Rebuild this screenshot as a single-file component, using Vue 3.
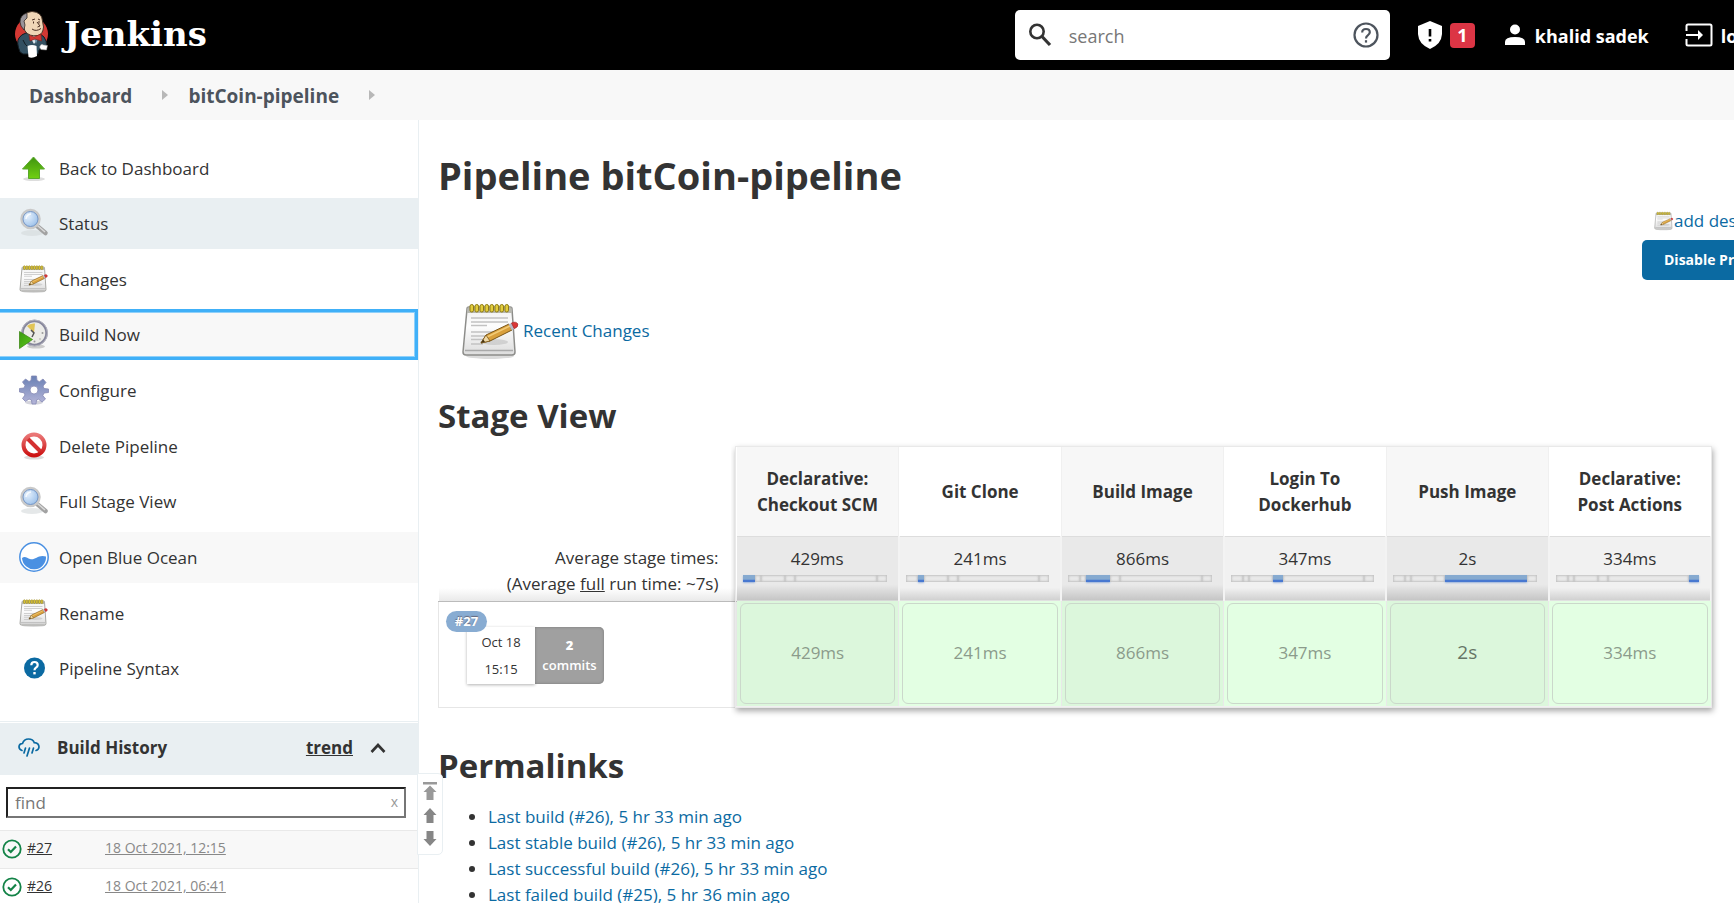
<script setup>
const tasks = [
  { label: 'Back to Dashboard', icon: 'i-up' },
  { label: 'Status', icon: 'i-search', state: 'active' },
  { label: 'Changes', icon: 'i-notepad' },
  { label: 'Build Now', icon: 'i-clock', state: 'focused' },
  { label: 'Configure', icon: 'i-gear' },
  { label: 'Delete Pipeline', icon: 'i-delete' },
  { label: 'Full Stage View', icon: 'i-search' },
  { label: 'Open Blue Ocean', icon: 'i-ocean', state: 'hovered' },
  { label: 'Rename', icon: 'i-notepad' },
  { label: 'Pipeline Syntax', icon: 'i-help' },
]
const builds = [
  { id: '#27', date: '18 Oct 2021, 12:15' },
  { id: '#26', date: '18 Oct 2021, 06:41' },
]
const stages = [
  { name: ['Declarative:', 'Checkout SCM'], time: '429ms', share: 12 },
  { name: ['Git Clone'], time: '241ms', share: 6 },
  { name: ['Build Image'], time: '866ms', share: 24 },
  { name: ['Login To', 'Dockerhub'], time: '347ms', share: 10 },
  { name: ['Push Image'], time: '2s', share: 81, slow: true },
  { name: ['Declarative:', 'Post Actions'], time: '334ms', share: 10 },
]
const permalinks = [
  'Last build (#26), 5 hr 33 min ago',
  'Last stable build (#26), 5 hr 33 min ago',
  'Last successful build (#26), 5 hr 33 min ago',
  'Last failed build (#25), 5 hr 36 min ago',
]
</script>

<template>
  <div class="page">
    <svg class="defs" aria-hidden="true">
      <defs>
        <linearGradient id="g-up" x1="0" y1="0" x2="0" y2="1"><stop offset="0" stop-color="#3f9410" /><stop offset="1" stop-color="#70d010" /></linearGradient>
        <linearGradient id="g-paper" x1="0" y1="0" x2="0" y2="1"><stop offset="0" stop-color="#f1f1f1" /><stop offset=".4" stop-color="#fdfdfd" /><stop offset="1" stop-color="#dcdcdc" /></linearGradient>
        <linearGradient id="g-gear" x1="0" y1="0" x2="0" y2="1"><stop offset="0" stop-color="#6980b4" /><stop offset="1" stop-color="#b5b5d8" /></linearGradient>
        <linearGradient id="g-red" x1="0" y1="0" x2="0" y2="1"><stop offset="0" stop-color="#ea7777" /><stop offset="1" stop-color="#cc1212" /></linearGradient>
        <radialGradient id="g-lens" cx=".35" cy=".35" r=".75"><stop offset="0" stop-color="#e6f1fd" /><stop offset="1" stop-color="#8fb8e6" /></radialGradient>
        <linearGradient id="g-play" x1="0" y1="0" x2="1" y2="1"><stop offset="0" stop-color="#3a9a10" /><stop offset="1" stop-color="#5cc81c" /></linearGradient>
      </defs>
      <symbol id="i-up" viewBox="0 0 30 30">
        <ellipse cx="15" cy="26" rx="11" ry="2" fill="#ddd" />
        <path d="M14.500 4 L25.500 16 H20.500 V25.500 H9.500 V16 H3.500 Z" fill="url(#g-up)" stroke="#5aa82c" stroke-width="1" />
      </symbol>
      <symbol id="i-search" viewBox="0 0 30 30">
        <ellipse cx="13" cy="25" rx="11" ry="3" fill="#d4d8da" opacity=".6" />
        <path d="M17.500 17.500 L26.500 25" stroke="#a2a2a2" stroke-width="4.500" stroke-linecap="round" />
        <path d="M18.500 17.500 L26 24" stroke="#d9d9d9" stroke-width="1.500" />
        <circle cx="11.500" cy="11" r="9" fill="url(#g-lens)" stroke="#c9c9c9" stroke-width="2.500" />
        <circle cx="11.500" cy="11" r="7.500" fill="none" stroke="#7897c4" stroke-width="1" />
        <path d="M7 11 Q7.500 6.500 12 6" stroke="#fff" stroke-width="1.500" fill="none" opacity=".8" />
      </symbol>
      <symbol id="i-notepad" viewBox="0 0 60 60">
        <ellipse cx="29" cy="55" rx="24" ry="3" fill="#ccc" opacity=".7" />
        <path d="M6 8 Q6 6 8 6 H49 Q51 6 51 8 L54 51 Q54 54 51 54 H5 Q2 54 2 51 Z" fill="url(#g-paper)" stroke="#8d8d8a" stroke-width="1.500" />
        <path d="M6.500 6.500 H50.500 L51 12 H6 Z" fill="#b8b8b0" />
        <path d="M4 49.500 H52" stroke="#a9a9a9" stroke-width="1.500" />
        <g stroke="#c2c2c2" stroke-width="1.500"><path d="M10 17H47M10 21H47M10 24.500H26M10 31H42M10 35H37M10 38.500H30M10 43H22" /></g>
        <g fill="#e3cd3c" stroke="#8d7b12" stroke-width="1"><rect x="9" y="3.500" width="3.500" height="7.500" rx="1.700" /><rect x="14" y="3.500" width="3.500" height="7.500" rx="1.700" /><rect x="19" y="3.500" width="3.500" height="7.500" rx="1.700" /><rect x="24" y="3.500" width="3.500" height="7.500" rx="1.700" /><rect x="29" y="3.500" width="3.500" height="7.500" rx="1.700" /><rect x="34" y="3.500" width="3.500" height="7.500" rx="1.700" /><rect x="39" y="3.500" width="3.500" height="7.500" rx="1.700" /><rect x="44" y="3.500" width="3.500" height="7.500" rx="1.700" /></g>
        <ellipse cx="33" cy="41" rx="14" ry="3" fill="#aaa" opacity=".4" />
        <path d="M20 42 L25 34 L48 23 L51 29 L29 40 Z" fill="#d9a03c" stroke="#7a5516" stroke-width="1" />
        <path d="M26 36 L49 25" stroke="#f3cc78" stroke-width="1.500" />
        <path d="M20 42 L25 34 L29 40 Z" fill="#efd8a4" stroke="#7a5516" stroke-width=".800" />
        <path d="M20 42 L22.200 38.500 L24 40.800 Z" fill="#443211" />
        <path d="M47.500 23.300 L50.500 22 L53.300 27.700 L50.500 29 Z" fill="#b9b9c6" />
        <path d="M50.500 22 Q55 20 56.800 23 Q57.500 26 53.300 27.700 Z" fill="#dc3535" stroke="#a83030" stroke-width=".800" />
      </symbol>
      <symbol id="i-clock" viewBox="0 0 30 30">
        <ellipse cx="17" cy="27.500" rx="9" ry="2" fill="#ccc" />
        <circle cx="15.500" cy="14" r="12" fill="#ecece8" stroke="#87879c" stroke-width="2.500" />
        <circle cx="15.500" cy="14" r="13" fill="none" stroke="#b4b4be" stroke-width="1" />
        <path d="M15 14 L8 7 Q11 4 16 4.500 Z" fill="#e1c455" />
        <path d="M12 11 L15 14 L13 18" stroke="#555" stroke-width="1.500" fill="none" />
        <g fill="#999"><circle cx="23.500" cy="14" r="1" /><circle cx="15.500" cy="22.500" r="1" /><circle cx="21" cy="20" r=".700" /></g>
        <path d="M.500 12.500 L13.500 20.500 L.500 29.500 Z" fill="url(#g-play)" stroke="#3f8a18" stroke-width=".800" />
      </symbol>
      <symbol id="i-gear" viewBox="0 0 30 30">
        <ellipse cx="15" cy="27.500" rx="9" ry="2" fill="#d4d4dc" />
        <path fill-rule="evenodd" d="M12.500 1 H17.500 L18 5.500 L20.500 6.700 L24 4 L27 7.500 L24 11 L25 13.500 L29.500 14 V17.500 L25 18 L23.800 20.500 L26.500 24 L23 27 L19.500 24.200 L17.500 25 L17 29 H13 L12.500 25 L10 24 L6.500 26.500 L3.500 23.500 L6 20 L5 17.800 L.500 17 V13.500 L5 13 L6 10.500 L3.500 7 L6.500 4 L10 6.500 L12 5.500 Z M15 11 A4 4 0 1 0 15 19 A4 4 0 1 0 15 11 Z" fill="url(#g-gear)" stroke="#8488b4" stroke-width=".800" />
      </symbol>
      <symbol id="i-delete" viewBox="0 0 30 30">
        <ellipse cx="15" cy="26.500" rx="10" ry="2" fill="#ddd" />
        <path d="M8 7 L22 21" stroke="#d43030" stroke-width="4" />
        <circle cx="15" cy="14" r="10.500" fill="none" stroke="url(#g-red)" stroke-width="4" />
      </symbol>
      <symbol id="i-ocean" viewBox="0 0 30 30">
        <circle cx="15" cy="15" r="14.200" fill="#fff" stroke="#4a90e2" stroke-width="1.500" />
        <path d="M3 16 C6 13.500 8 16 11 17 C16 18.800 19 12 27 14.500 A12 12 0 0 1 3 16 Z" fill="#4a90e2" />
      </symbol>
      <symbol id="i-help" viewBox="0 0 30 30">
        <circle cx="15.500" cy="15" r="10.500" fill="#0b6aa2" />
        <path d="M12.300 12.300 Q12.300 9 15.500 9 Q18.700 9 18.700 12 Q18.700 13.500 17 14.700 Q15.500 15.800 15.500 17.200" fill="none" stroke="#fff" stroke-width="2.200" />
        <rect x="14.300" y="19" width="2.400" height="2.400" fill="#fff" />
      </symbol>
    </svg>

    <header class="header">
      <a class="logo" href="#">
        <svg width="36" height="50" viewBox="0 0 36 50">
          <circle cx="17.500" cy="24" r="16.500" fill="#d33833" />
          <path d="M6 42 Q2 32 5 28 Q7 24.500 12 23 H25 L30 27 Q33 31 32.500 36 L25 40 L24 44 H9 Z" fill="#335061" stroke="#131c22" stroke-width="1" />
          <path d="M9 30 Q11 35 14 37" fill="none" stroke="#131c22" stroke-width="1" />
          <path d="M15 25 L20 34 L27 25 Z" fill="#dfe8ee" />
          <path d="M20 28 L22 34 L24 28 Z" fill="#6f93a8" />
          <path d="M8 13 Q8 2 18 1.500 Q28 2 28.500 11 L29.500 17 Q29 24 24 25.500 Q15 27 11 21 Z" fill="#f0d6b7" stroke="#49372a" stroke-width="1" />
          <path d="M13 3 Q6 5 6 12 L7 16 L10 20 L11 15 L10 11 L13 8 Z" fill="#99959a" stroke="#332c28" stroke-width=".800" />
          <path d="M18 10 L21 9 M24 9 L26 10 M19.500 11.500 V13.500 M25 11 V13.500 M23 12 L26 16 L23.500 17 M18 19 Q22 22 27 18.500" fill="none" stroke="#4a2f22" stroke-width="1" />
          <path d="M15 25 L20 27 L27 24 L27.500 31 L21 29 L16 31 Z" fill="#d33833" stroke="#81221e" stroke-width=".700" />
          <path d="M13.500 36 Q18 34 22.500 36 L23 46 Q18 49 14.500 47 Z" fill="#fff" />
          <path d="M25.500 37 Q27 33 29.500 35 L33.500 35.500 L32.500 40 L27 39.500 Z" fill="#fff" stroke="#999" stroke-width=".500" />
        </svg>
        <span>Jenkins</span>
      </a>
      <div class="search">
        <svg width="24" height="26" viewBox="0 0 24 26" fill="none" stroke="#333"><circle cx="9" cy="9.500" r="6.700" stroke-width="2.600" /><path d="M14 14.500 L22 23" stroke-width="3.200" /></svg>
        <input type="text" placeholder="search" aria-label="Search" />
        <a href="#" aria-label="Search help"><svg width="26" height="26" viewBox="0 0 26 26" fill="none" stroke="#4d545d" stroke-width="2.200"><circle cx="13" cy="13" r="11.500" /><path d="M9.200 10.500 Q9.200 7 13 7 Q16.800 7 16.800 10.300 Q16.800 12 14.800 13.300 Q13 14.500 13 16.500" /><path d="M13 18.200 V20.600" /></svg></a>
      </div>
      <a class="head-link alerts" href="#" aria-label="Security warnings">
        <svg width="24" height="28" viewBox="0 0 24 28"><path d="M12 0 L24 5 V13 Q23.500 23 12 28 Q.500 23 0 13 V5 Z" fill="#fff" /><path d="M12 8 V15.500 M12 18 V20.500" stroke="#000" stroke-width="2.600" /></svg>
        <span class="count">1</span>
      </a>
      <a class="head-link user" href="#">
        <svg width="22" height="22" viewBox="0 0 22 22" fill="#fff"><circle cx="11" cy="5.500" r="5" /><path d="M1 21 V18 Q1 13 11 13 Q21 13 21 18 V21 Z" /></svg>
        <span>khalid sadek</span>
      </a>
      <a class="head-link logout" href="#">
        <svg width="28" height="24" viewBox="0 0 28 24" fill="none" stroke="#fff" stroke-width="2"><path d="M1.500 8 V3 Q1.500 1.500 3 1.500 H25 Q26.500 1.500 26.500 3 V21 Q26.500 22.500 25 22.500 H3 Q1.500 22.500 1.500 21 V16" /><path d="M1 12 H15" /><path d="M13 7 L18 12 L13 17 Z" fill="#fff" stroke="none" /></svg>
        <span>log out</span>
      </a>
    </header>

    <nav class="crumbs" aria-label="Breadcrumb">
      <a href="#">Dashboard</a>
      <svg width="6" height="10" viewBox="0 0 6 10"><path d="M0 0 L6 5 L0 10 Z" fill="#b8b8b8" /></svg>
      <a href="#">bitCoin-pipeline</a>
      <svg width="6" height="10" viewBox="0 0 6 10"><path d="M0 0 L6 5 L0 10 Z" fill="#b8b8b8" /></svg>
    </nav>

    <div class="body">
      <aside class="side">
        <nav class="tasks">
          <a v-for="t in tasks" :key="t.label" href="#" :class="['task', t.state]">
            <svg width="30" height="30"><use :href="'#' + t.icon" /></svg>
            <span>{{ t.label }}</span>
          </a>
        </nav>
        <section class="history">
          <div class="history-head">
            <svg width="22" height="20" viewBox="0 0 22 20" fill="none" stroke="#0b6aa2" stroke-width="1.700" stroke-linecap="round"><path d="M4 12.500 Q1 11.500 1 8.700 Q1.200 5.700 4.500 5.500 Q6 1 10.500 1 Q15 1 16.200 4.600 Q21 5 21 9 Q20.800 11.700 18 12.500" /><path d="M7.500 10 L6 15 M11.500 10 L9 18 M15.500 10 L14 15" /></svg>
            <h2>Build History</h2>
            <a href="#">trend</a>
            <button type="button" aria-label="Collapse"><svg width="16" height="10" viewBox="0 0 16 10" fill="none" stroke="#333" stroke-width="2.600"><path d="M1.500 9 L8 2 L14.500 9" /></svg></button>
          </div>
          <div class="find">
            <input type="text" placeholder="find" aria-label="Find build" />
            <button type="button" aria-label="Clear">x</button>
          </div>
          <div v-for="b in builds" :key="b.id" class="build">
            <svg width="20" height="20" viewBox="0 0 20 20" fill="none" stroke="#138347"><circle cx="10" cy="10" r="8.700" stroke-width="1.800" /><path d="M6 10.300 L8.800 13 L14 7.500" stroke-width="2.200" /></svg>
            <a href="#">{{ b.id }}</a>
            <a class="date" href="#">{{ b.date }}</a>
          </div>
          <div class="pager">
            <button type="button" aria-label="Newest builds"><svg width="14" height="18" viewBox="0 0 14 18" fill="#999"><path d="M0 0 H14 V2.500 H0 Z M7 3.500 L13.500 10 H10.500 V18 H3.500 V10 H.500 Z" /></svg></button>
            <button type="button" aria-label="Newer builds"><svg width="14" height="15" viewBox="0 0 14 15" fill="#868686"><path d="M7 0 L13.500 7 H10.500 V15 H3.500 V7 H.500 Z" /></svg></button>
            <button type="button" aria-label="Older builds"><svg width="14" height="15" viewBox="0 0 14 15" fill="#868686"><path d="M7 15 L.500 8 H3.500 V0 H10.500 V8 H13.500 Z" /></svg></button>
          </div>
        </section>
      </aside>

      <main class="main">
        <h1>Pipeline bitCoin-pipeline</h1>
        <div class="actions">
          <a href="#"><svg width="20" height="20"><use href="#i-notepad" /></svg>add description</a>
          <button type="button">Disable Project</button>
        </div>
        <a class="recent" href="#">
          <svg width="60" height="60"><use href="#i-notepad" /></svg>
          <span>Recent Changes</span>
        </a>
        <h2>Stage View</h2>
        <div class="stage-view">
          <table>
            <thead>
              <tr class="names">
                <td class="lead"></td>
                <th v-for="(s, i) in stages" :key="i" scope="col"><span v-for="n in s.name" :key="n">{{ n }}</span></th>
              </tr>
            </thead>
            <tbody>
              <tr class="averages">
                <td class="lead">Average stage times:<br />(Average <u>full</u> run time: ~7s)</td>
                <td v-for="(s, i) in stages" :key="i">
                  {{ s.time }}
                  <div class="meter">
                    <i v-for="(p, j) in stages" :key="j" :class="{ on: i === j }" :style="{ flexGrow: p.share }"></i>
                  </div>
                </td>
              </tr>
              <tr class="run">
                <td class="lead">
                  <div class="run-info">
                    <span class="run-id">#27</span>
                    <div class="run-date"><span>Oct 18</span><span>15:15</span></div>
                    <div class="commits"><b>2</b><span>commits</span></div>
                  </div>
                </td>
                <td v-for="(s, i) in stages" :key="i"><div :class="['result', { slow: s.slow }]">{{ s.time }}</div></td>
              </tr>
            </tbody>
          </table>
        </div>
        <h2>Permalinks</h2>
        <ul class="permalinks">
          <li v-for="p in permalinks" :key="p"><a href="#">{{ p }}</a></li>
        </ul>
      </main>
    </div>
  </div>
</template>

<style>
html, body { overflow: hidden; background: #fff; }
</style>

<style scoped>
* { box-sizing: border-box; }
.page {
  height: 100vh;
  overflow: hidden;
  display: flex;
  flex-direction: column;
  font-family: "Open Sans", "Noto Sans", sans-serif;
  font-size: 17px;
  font-weight: 500;
  line-height: 26px;
  color: #333;
}
.defs { position: absolute; width: 0; height: 0; }
svg { flex: none; display: block; }
a { color: inherit; text-decoration: none; }
button, input { font: inherit; }
h1, h2 { margin: 0; font-weight: 700; }

.header {
  flex: none;
  display: flex;
  align-items: center;
  height: 70px;
  margin-right: -73px;
  padding: 0 24px 0 14px;
  background: #000;
  color: #fff;
  white-space: nowrap;
}
.logo { display: flex; align-items: center; gap: 14px; margin-right: auto; font: 700 34px/48px "DejaVu Serif", serif; }
.logo span { padding-bottom: 2px; }
.search {
  display: flex;
  align-items: center;
  width: 375px;
  height: 50px;
  padding: 0 11px 0 13px;
  background: #fff;
  border-radius: 5px;
}
.search input { flex: 1; min-width: 0; padding: 2px 0 0; margin: 0 17px; border: 0; outline: 0; font-size: 18px; font-weight: 400; color: #333; }
.search input::placeholder { color: #777; opacity: 1; }
.head-link { display: flex; align-items: center; font-size: 18px; font-weight: 700; }
.user span, .logout span { padding-top: 2px; }
.alerts { margin-left: 28px; gap: 8px; }
.count { width: 25px; height: 25px; line-height: 25px; text-align: center; border-radius: 4px; background: #dc3545; }
.user { margin-left: 29px; gap: 9px; }
.logout { margin-left: 36px; gap: 8px; }

.crumbs { flex: none; display: flex; align-items: center; gap: 30px; height: 50px; padding: 0 29px; background: #f8f8f8; font-size: 19px; font-weight: 700; color: #4d545d; }
.crumbs a { padding-top: 2px; }
.crumbs svg + a { margin-left: -10px; }

.body { flex: 1; min-height: 0; display: flex; }
.side { flex: none; width: 419px; border-right: 1px solid #e9eff2; }
.tasks { display: flex; flex-direction: column; justify-content: space-between; min-height: 574px; padding-top: 22px; }
.task { display: flex; align-items: center; gap: 10px; height: 51px; padding-left: 19px; }
.task span { padding-top: 2px; }
.active { background: #e9eff2; }
.hovered { background: #f8f8f8; }
.focused { background: #f8f8f8; box-shadow: inset 0 0 0 3px #40b0f8, inset 0 0 0 4px #8fd0fa; margin-left: -4px; padding-left: 23px; }

.history { position: relative; margin-top: 27px; border-top: 1px solid #e9eff2; padding-top: 1px; }
.history-head { display: flex; align-items: center; height: 52px; padding: 0 32px 2px 18px; background: #e9eff2; }
.history-head h2 { margin: 0 auto 0 17px; font-size: 17px; line-height: 26px; }
.history-head a { font-weight: 700; text-decoration: underline; }
.history-head button { margin-left: 17px; padding: 0; border: 0; background: none; }
.find { position: relative; padding: 12px 12px 12px 6px; }
.find input { display: block; width: 100%; height: 31px; padding: 0 24px 0 7px; border: 2px inset #767676; outline: 0; font-weight: 400; }
.find input::placeholder { color: #777; opacity: 1; }
.find button { position: absolute; right: 16px; top: 12px; padding: 0 4px; border: 0; background: none; color: #999; font-size: 14px; line-height: 30px; font-weight: 400; }
.build { display: flex; align-items: center; height: 38px; padding: 0 2px 2px; border-top: 1px solid #e9e9e9; font-size: 14px; background: #f8f8f8; }
.build + .build { background: #fff; }
.build a { width: 79px; margin-left: 5px; text-decoration: underline; line-height: 20px; padding-bottom: 2px; }
.build a.date { width: auto; margin-left: -1px; color: #888; font-weight: 400; }
.pager { position: absolute; z-index: 1; left: 417px; top: 51px; width: 26px; height: 82px; display: flex; flex-direction: column; align-items: center; justify-content: space-evenly; background: #fff; border: 1px solid #e9eff2; border-radius: 0 5px 5px 0; }
.pager button { padding: 0; border: 0; background: none; }

.main { flex: 1; min-width: 0; padding: 30px 20px 0 19px; }
h1 { font-size: 38px; line-height: 50px; }
.main h2 { font-size: 33px; line-height: 44px; }
.actions { display: flex; flex-direction: column; align-items: flex-end; gap: 6px; margin: 8px -88px 0 0; white-space: nowrap; color: #0b6aa2; }
.actions a { display: flex; align-items: center; width: 148px; }
.actions button { width: 160px; height: 40px; padding: 0 0 0 22px; text-align: left; border: 0; border-radius: 5px; background: #0b6aa2; color: #fff; font-size: 14px; font-weight: 700; }
.recent { display: inline-flex; align-items: center; gap: 2px; margin: 21px 0 0 23px; color: #0b6aa2; vertical-align: top; }
.recent + h2 { margin-top: 33px; }
.stage-view { position: relative; margin: 8px 2px 0 0; }
.stage-view::after { content: ""; position: absolute; inset: 0 0 0 297px; border: 1px solid #e9e9e9; box-shadow: 1px 3px 6px rgba(0, 0, 0, .35); pointer-events: none; clip-path: inset(-4px -10px -10px -4px); }
table { width: 100%; table-layout: fixed; border-collapse: collapse; }
th, td { padding: 0; text-align: center; }
.lead { width: 298px; }
.names { height: 90px; }
.names th { padding-top: 2px; border-right: 1px solid #f0f0f0; border-bottom: 1px solid #ddd; font-weight: 700; }
.names th:nth-child(even) { background: #f7f7f7; }
.names th span { display: block; }
.averages { height: 65px; }
.averages td { padding-top: 9px; vertical-align: top; font-weight: 400; border-right: 2px solid #f3f3f3; background: linear-gradient(#f1f1f1 80%, #cfcfcf); }
.averages td:nth-child(even) { background: linear-gradient(#e9e9e9 75%, #c4c4c4); }
.averages td.lead { padding: 9px 18px 0 0; text-align: right; background: linear-gradient(#fff 80%, #e9e9e9); border: 0; border-bottom: 1px solid #bbb; }
.meter { display: flex; height: 7px; margin: 3px 11px 0 6px; }
.meter i { flex: 0 1 0; background: #e9e9e9; box-shadow: inset 0 0 2px 1px #c4c4c4; }
.meter .on { background: linear-gradient(#86aad0 60%, #4878d0 75%); box-shadow: 0 1px 2px #9bb4dc; }
.run { height: 106px; }
.run td { padding: 2px 3px; background: #e3ffe3; border-right: 1px solid #e9e9e9; border-bottom: 2px solid #f0f0f0; }
.run td:nth-child(even) { background: #dcf7dc; }
.run td.lead { padding: 0; vertical-align: top; background: #fff; border: 1px solid #e6e6e6; }
.result { height: 101px; line-height: 97px; border: 1px solid #cbd8cb; border-radius: 6px; font-weight: 400; color: #8b9b8b; }
.result.slow { font-size: 19px; color: #667566; }
.run-info { position: relative; display: flex; padding: 25px 0 0 28px; font-size: 13px; line-height: 18px; font-weight: 400; }
.run-id { position: absolute; left: 7px; top: 9px; width: 41px; height: 21px; line-height: 21px; border-radius: 11px; background: #88acd2; color: #fff; font-weight: 700; text-shadow: 0 -1px 1px #667; }
.run-date, .commits { display: flex; flex-direction: column; align-items: center; justify-content: center; height: 57px; }
.run-date { width: 68px; gap: 9px; background: #fff; box-shadow: 0 1px 3px rgba(0, 0, 0, .3); }
.commits { width: 69px; gap: 2px; background: #a0a0a0; border-radius: 0 5px 5px 0; box-shadow: inset 0 0 3px #777; color: #fff; font-weight: 600; }
.stage-view + h2 { margin-top: 36px; }
.permalinks { margin: 16px 0 0; padding: 0 0 0 50px; }
.permalinks a { color: #0b6aa2; }
</style>
